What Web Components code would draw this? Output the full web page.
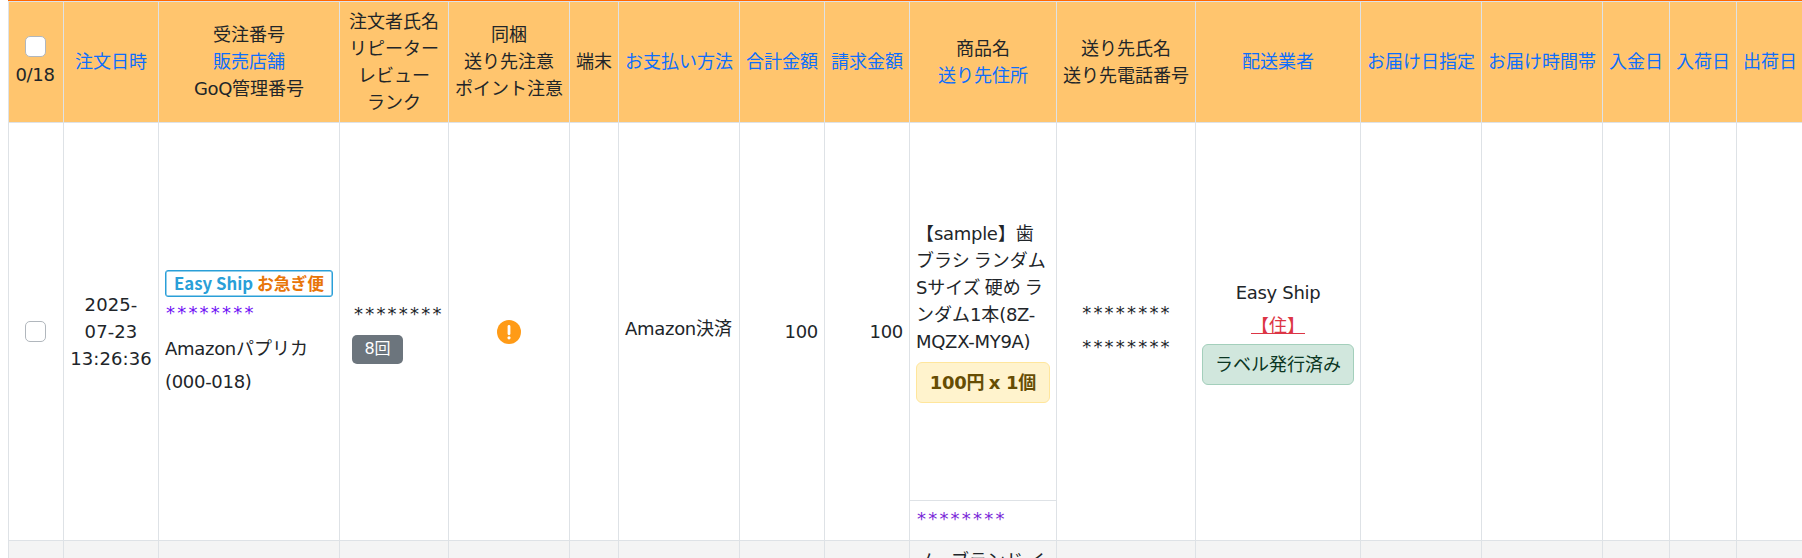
<!DOCTYPE html>
<html lang="ja">
<head>
    <meta charset="UTF-8">
    <meta name="viewport" content="width=device-width, initial-scale=1.0">
    <title>受注一覧</title>
    <style>
        * {
            margin: 0;
            padding: 0;
            box-sizing: border-box;
        }

        body {
            padding-left: 8px;
            font-family: "Noto Sans CJK JP", sans-serif;
            font-size: 18px;
            line-height: 27px;
            text-autospace: no-autospace;
            text-spacing-trim: space-all;
            color: #212529;
            background-color: #fff;
            overflow: hidden;
        }
    </style>
</head>
<body>
    <order-table></order-table>

    <script>
        // 行: 列幅はテーブル側の --columns で共有する
        class OrderRow extends HTMLElement {
            constructor() {
                super();
                this.attachShadow({ mode: 'open' });
                this.shadowRoot.innerHTML = `
                    <style>
                        :host {
                            display: grid;
                            grid-template-columns: var(--columns);
                            border-top: 1px solid #dee2e6;
                            box-sizing: border-box;
                            overflow: hidden;
                        }
                        :host([head]) {
                            height: 121px;
                            background-color: #ffc56e;
                        }
                        :host([body]) { height: 418px; }
                        :host([striped]) {
                            height: 120px;
                            background-color: #f4f4f4;
                        }
                    </style>
                    <slot></slot>
                `;
            }
        }

        class OrderCell extends HTMLElement {
            constructor() {
                super();
                this.attachShadow({ mode: 'open' });
                this.shadowRoot.innerHTML = `
                    <style>
                        :host {
                            display: flex;
                            flex-direction: column;
                            justify-content: center;
                            align-items: center;
                            border-left: 1px solid #dee2e6;
                            padding: 0 6px;
                            box-sizing: border-box;
                            white-space: nowrap;
                            min-width: 0;
                        }
                        :host([raised]) { padding-bottom: 3px; }
                        :host([check]) { padding: 0 7px 0 5px; }
                        :host([align="left"]) { align-items: flex-start; }
                        :host([align="right"]) { align-items: flex-end; }
                        :host([flush]) {
                            padding: 0;
                            align-items: stretch;
                        }
                    </style>
                    <slot></slot>
                `;
            }
        }

        // 欧文・数字 (インラインなので slot の前後に空白を入れない)
        class LatinText extends HTMLElement {
            constructor() {
                super();
                this.attachShadow({ mode: 'open' });
                this.shadowRoot.innerHTML = `<style>
                        :host {
                            display: inline;
                            font-family: "DejaVu Sans", sans-serif;
                            letter-spacing: var(--tracking, -0.3px);
                            line-height: 1;
                        }
                    </style><slot></slot>`;
            }
        }

        class MaskedText extends HTMLElement {
            constructor() {
                super();
                this.attachShadow({ mode: 'open' });
                this.shadowRoot.innerHTML = `
                    <style>
                        :host {
                            display: block;
                            height: 27px;
                            box-sizing: border-box;
                            font-family: "DejaVu Sans", sans-serif;
                            letter-spacing: 2.2px;
                        }
                        span {
                            display: block;
                            padding-top: 2px;
                        }
                    </style>
                    <span><slot></slot></span>
                `;
            }
        }

        class CheckBox extends HTMLElement {
            constructor() {
                super();
                this.attachShadow({ mode: 'open' });
                this.shadowRoot.innerHTML = `
                    <style>
                        :host { display: block; }
                        div {
                            width: 21px;
                            height: 21px;
                            border: 1px solid #b1b7bd;
                            border-radius: 5px;
                            background-color: #fff;
                            box-sizing: border-box;
                        }
                    </style>
                    <div></div>
                `;
            }
        }

        class StatusBadge extends HTMLElement {
            constructor() {
                super();
                this.attachShadow({ mode: 'open' });
                this.shadowRoot.innerHTML = `
                    <style>
                        :host {
                            display: flex;
                            justify-content: center;
                            box-sizing: border-box;
                            border-radius: 6px;
                            height: 41px;
                            line-height: 37px;
                        }
                        :host([type="count"]) {
                            width: 51px;
                            height: 29px;
                            line-height: 24px;
                            font-size: 16px;
                            border-radius: 5px;
                            color: #fff;
                            background-color: #6c757d;
                        }
                        :host([type="price"]) {
                            width: 134px;
                            font-weight: bold;
                            color: #664d03;
                            border: 1px solid #ffe69c;
                            background-color: #fff3cd;
                        }
                        :host([type="label"]) {
                            width: 152px;
                            color: #0a3622;
                            border: 1px solid #a3cfbb;
                            background-color: #d1e7dd;
                        }
                        :host([type="ship"]) {
                            width: 168px;
                            height: 27px;
                            line-height: 24px;
                            font-size: 16.8px;
                            font-weight: bold;
                            color: #2a9fd8;
                            border: 1px solid #2a9fd8;
                            box-shadow: inset 0 0 0 0.5px #2a9fd8;
                            border-radius: 3px;
                            background-color: #fff;
                        }
                    </style>
                    <span><slot></slot></span>
                `;
            }
        }

        class AlertIcon extends HTMLElement {
            constructor() {
                super();
                this.attachShadow({ mode: 'open' });
                this.shadowRoot.innerHTML = `
                    <style>
                        :host { display: block; height: 24px; }
                        svg { display: block; }
                    </style>
                    <svg width="24" height="24" viewBox="0 0 24 24">
                        <circle cx="12" cy="12" r="12" fill="#ff9b17"/>
                        <path d="M12 6.4v7.4" stroke="#fff" stroke-width="2.8" stroke-linecap="round"/>
                        <circle cx="12" cy="17.8" r="1.6" fill="#fff"/>
                    </svg>
                `;
            }
        }

        class OrderTable extends HTMLElement {
            constructor() {
                super();
                this.attachShadow({ mode: 'open' });

                // [見出しの行, ...]  '@' で始まる行は並べ替えリンク
                this.headers = [
                    ['@注文日時'],
                    ['受注番号', '@販売店舗', '<latin-text>GoQ</latin-text>管理番号'],
                    ['注文者氏名', 'リピーター', 'レビュー', 'ランク'],
                    ['同梱', '送り先注意', 'ポイント注意'],
                    ['端末'],
                    ['@お支払い方法'],
                    ['@合計金額'],
                    ['@請求金額'],
                    ['商品名', '@送り先住所'],
                    ['送り先氏名', '送り先電話番号'],
                    ['@配送業者'],
                    ['@お届け日指定'],
                    ['@お届け時間帯'],
                    ['@入金日'],
                    ['@入荷日'],
                    ['@出荷日']
                ];

                this.shadowRoot.innerHTML = `
                    <style>
                        :host {
                            --columns: 55px 95px 181px 109px 121px 49px 121px 85px 85px 147px 139px 165px 121px 121px 67px 67px 67px;
                            display: block;
                            width: 1795px;
                            height: 558px;
                            border-top: 1px solid #ff6600;
                            box-sizing: border-box;
                            overflow: hidden;
                        }
                        .link { color: #0d6efd; }
                        .count { margin-top: 3px; margin-bottom: 1px; }
                        .time { --tracking: 0.1px; }
                        .order { color: #6f10f5; padding-left: 1px; }
                        .visited { color: #7a28d8; padding: 2px 0 0 7px; }
                        .shop { margin-top: 10px; }
                        .shop + div { margin-top: 6px; }
                        .orange { color: #e87508; }
                        .customer { margin-left: 7px; }
                        .customer masked-text { margin-top: -1px; padding-left: 1px; }
                        .customer status-badge { margin-top: 10px; margin-left: -1px; }
                        .payment { margin-bottom: 8px; }
                        .first { padding-left: 2px; }
                        .second { margin: 7px 0 8px; padding-left: 2px; }
                        .address { color: #dc3545; text-decoration: underline; margin: 6px 0; }
                        .product {
                            height: 377px;
                            padding: 0 0 2px 6px;
                            box-sizing: border-box;
                            display: flex;
                            flex-direction: column;
                            justify-content: center;
                        }
                        .product status-badge { margin-top: 8px; }
                        .recipient {
                            flex: 1;
                            border-top: 1px solid #dee2e6;
                        }
                        .next { padding: 5px 0 0 6px; }
                    </style>
                    <order-row head>
                        <order-cell check>
                            <check-box></check-box>
                            <div class="count"><latin-text>0/18</latin-text></div>
                        </order-cell>
                        ${this.headers.map(lines => this.headerCell(lines)).join('')}
                    </order-row>
                    <order-row body>
                        <order-cell check><check-box></check-box></order-cell>
                        <order-cell raised class="time">
                            <div><latin-text>2025-</latin-text></div>
                            <div><latin-text>07-23</latin-text></div>
                            <div><latin-text>13:26:36</latin-text></div>
                        </order-cell>
                        <order-cell align="left">
                            <status-badge type="ship">Easy Ship <span class="orange">お急ぎ便</span></status-badge>
                            <masked-text class="order">********</masked-text>
                            <div class="shop"><latin-text>Amazon</latin-text>パプリカ</div>
                            <div><latin-text>(000-018)</latin-text></div>
                        </order-cell>
                        <order-cell align="left">
                            <div class="customer">
                                <masked-text>********</masked-text>
                                <status-badge type="count"><latin-text>8</latin-text>回</status-badge>
                            </div>
                        </order-cell>
                        <order-cell><alert-icon></alert-icon></order-cell>
                        <order-cell></order-cell>
                        <order-cell align="left"><div class="payment"><latin-text>Amazon</latin-text>決済</div></order-cell>
                        <order-cell align="right"><latin-text>100</latin-text></order-cell>
                        <order-cell align="right"><latin-text>100</latin-text></order-cell>
                        <order-cell flush>
                            <div class="product">
                                <div>【<latin-text>sample</latin-text>】歯</div>
                                <div>ブラシ ランダム</div>
                                <div><latin-text>S</latin-text>サイズ 硬め ラ</div>
                                <div>ンダム<latin-text>1</latin-text>本<latin-text>(8Z-</latin-text></div>
                                <div><latin-text>MQZX-MY9A)</latin-text></div>
                                <status-badge type="price"><latin-text>100</latin-text>円 <latin-text>x 1</latin-text>個</status-badge>
                            </div>
                            <div class="recipient"><masked-text class="visited">********</masked-text></div>
                        </order-cell>
                        <order-cell>
                            <masked-text class="first">********</masked-text>
                            <masked-text class="second">********</masked-text>
                        </order-cell>
                        <order-cell>
                            <div><latin-text>Easy Ship</latin-text></div>
                            <div class="address">【住】</div>
                            <status-badge type="label">ラベル発行済み</status-badge>
                        </order-cell>
                        ${'<order-cell></order-cell>'.repeat(5)}
                    </order-row>
                    <order-row striped>
                        ${'<order-cell></order-cell>'.repeat(9)}
                        <order-cell flush style="justify-content: flex-start"><div class="next">ノーブランド イ</div></order-cell>
                        ${'<order-cell></order-cell>'.repeat(7)}
                    </order-row>
                `;
            }

            headerCell(lines) {
                const items = lines.map(line => line.startsWith('@')
                    ? `<div class="link">${line.slice(1)}</div>`
                    : `<div>${line}</div>`);
                return `<order-cell raised>${items.join('')}</order-cell>`;
            }
        }

        customElements.define('order-row', OrderRow);
        customElements.define('order-cell', OrderCell);
        customElements.define('latin-text', LatinText);
        customElements.define('masked-text', MaskedText);
        customElements.define('check-box', CheckBox);
        customElements.define('status-badge', StatusBadge);
        customElements.define('alert-icon', AlertIcon);
        customElements.define('order-table', OrderTable);
    </script>
</body>
</html>
